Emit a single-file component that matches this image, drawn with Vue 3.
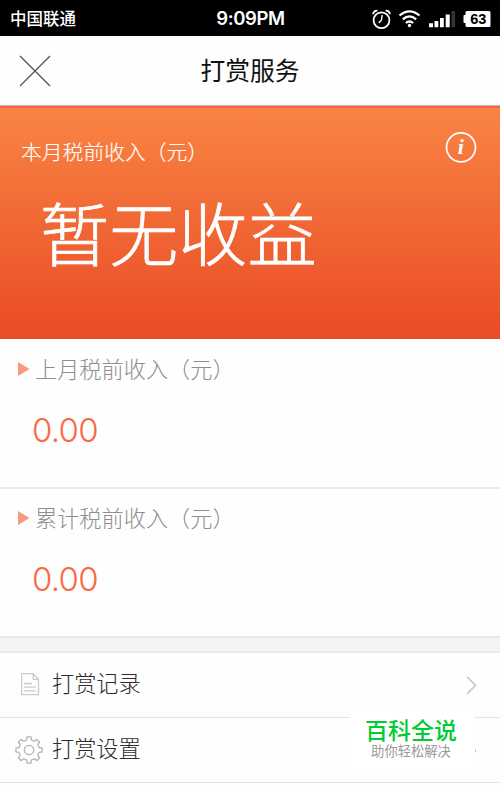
<script setup>
const incomes = [
  { label: '上月税前收入（元）', amount: '0.00' },
  { label: '累计税前收入（元）', amount: '0.00' },
]

// Eight-toothed outline: each tooth rises from the root circle to the tip circle.
const gearPoints = Array.from({ length: 8 }, (_, i) => {
  const base = i * 45 - 90
  return [
    [-15.5, 10.2],
    [-11.5, 10.8],
    [-9, 13.2],
    [9, 13.2],
    [11.5, 10.8],
    [15.5, 10.2],
  ].map(([offset, radius]) => {
    const a = ((base + offset) * Math.PI) / 180
    return `${(14 + radius * Math.cos(a)).toFixed(2)},${(14 + radius * Math.sin(a)).toFixed(2)}`
  }).join(' ')
}).join(' ')
</script>

<template>
  <main class="screen">
    <div class="status">
      <span class="carrier">中国联通</span>
      <span class="time">9:09PM</span>
      <svg class="indicators" width="122" height="24" viewBox="0 0 122 24">
        <g fill="none" stroke="#fff" stroke-width="1.8" stroke-linecap="round">
          <circle cx="12.5" cy="13.2" r="7.9" />
          <path d="M4.200 6.500Q5 4 7.700 3.700M17.300 3.700Q20 4 20.800 6.500" />
          <path d="M13 8.500L12.500 13L10.200 15.500" stroke-width="1.400" />
          <path d="M30.500 8.500Q40.500 .2 50.500 8.500M33.800 12.300Q40.500 6.600 47.200 12.300M36.800 16Q40.500 13 44.200 16" stroke-width="2.200" stroke-linecap="butt" />
        </g>
        <circle cx="40.500" cy="18.500" r="1.700" fill="#fff" />
        <path d="M60 16.200h4v4h-4zM65.500 14h3.800v6.200h-3.800zM71 11h3.800v9.200H71zM76.700 7.400h4v12.800h-4z" fill="#fff" />
        <path d="M82.500 4h3.600v16.200h-3.600z" fill="#333" />
        <path d="M98 4h22q1.500 0 1.500 1.500v13q0 1.500-1.500 1.500H98q-1.500 0-1.500-1.500V16h-1.200q-.8 0-.8-.8V8.800q0-.8.8-.8h1.200V5.500Q96.500 4 98 4z" fill="#fff" />
        <text x="109.300" y="17.200" text-anchor="middle" class="battery">63</text>
      </svg>
    </div>

    <header class="bar">
      <svg class="close" width="32" height="32" viewBox="0 0 32 32">
        <path d="M1 1L31 31M31 1L1 31" stroke="#555" stroke-width="1.300" />
      </svg>
      <h1>打赏服务</h1>
    </header>

    <section class="hero">
      <div class="hero-top">
        <span class="hero-label">本月税前收入（元）</span>
        <svg class="info" width="32" height="32" viewBox="0 0 32 32">
          <circle cx="16" cy="15.300" r="14.500" fill="none" stroke="#fff" stroke-width="1.700" />
          <text x="15.800" y="22.300" text-anchor="middle" class="info-i">i</text>
        </svg>
      </div>
      <p class="hero-value">暂无收益</p>
    </section>

    <section v-for="item in incomes" :key="item.label" class="income">
      <div class="income-label">
        <svg width="12" height="14" viewBox="0 0 12 14"><path d="M0 0L11.500 7L0 14z" fill="#f79a80" /></svg>
        <span>{{ item.label }}</span>
      </div>
      <p class="amount">{{ item.amount }}</p>
    </section>

    <div class="gap"></div>

    <nav>
      <div class="item">
        <svg class="icon" width="28" height="28" viewBox="0 0 28 28" fill="none" stroke="#ccc" stroke-width="1.300">
          <path d="M6.700 2.700H18.200L23.500 8.300V23.700H6.700zM18.200 2.700V8.300H23.500M9 12.500H17M9 16.200H21M9 19.900H21" />
        </svg>
        <span class="name">打赏记录</span>
        <svg class="chevron" width="11" height="20" viewBox="0 0 11 20">
          <path d="M1.200 1.800L9.500 10.300L1.200 18.800" fill="none" stroke="#ccc" stroke-width="1.700" />
        </svg>
      </div>
      <div class="item">
        <svg class="icon" width="28" height="28" viewBox="0 0 28 28" fill="none" stroke="#b5b5b5" stroke-width="1.300" stroke-linejoin="round">
          <polygon :points="gearPoints" />
          <circle cx="14" cy="14" r="4.700" />
        </svg>
        <span class="name">打赏设置</span>
        <i class="speck"></i>
      </div>
    </nav>

    <aside class="watermark">
      <strong>百科全说</strong>
      <span>助你轻松解决</span>
    </aside>
  </main>
</template>

<style>
body {
  margin: 0;
  background: #fff;
}
</style>

<style scoped>
.screen {
  position: relative;
  box-sizing: border-box;
  width: 500px;
  height: 790px;
  overflow: hidden;
  background: #fefefe;
  font-family: "Noto Sans CJK SC", sans-serif;
  font-weight: 300;
}
p, h1 { margin: 0; }
svg { display: block; flex: none; }
.status {
  display: grid;
  grid-template-columns: 1fr auto 1fr;
  align-items: center;
  box-sizing: border-box;
  height: 36px;
  padding: 0 9px 0 10px;
  background: #000;
  color: #fff;
}
.carrier {
  height: 36px;
  font-size: 16.500px;
  font-weight: 500;
  line-height: 35px;
}
.time {
  font: 600 18.500px/37px "Inter", sans-serif;
  letter-spacing: -0.400px;
}
.indicators { justify-self: end; }
.battery {
  font: 700 14.500px "Liberation Sans", sans-serif;
  fill: #000;
}
.bar {
  display: grid;
  grid-template-columns: 32px 1fr 32px;
  align-items: center;
  box-sizing: border-box;
  height: 70px;
  padding: 0 19px;
  border-bottom: 1px solid #c9b8b2;
}
h1 {
  height: 69px;
  color: #111;
  font-size: 24.800px;
  font-weight: 400;
  line-height: 67px;
  text-align: center;
}
.hero {
  box-sizing: border-box;
  height: 233px;
  padding: 24px 23px 0 21px;
  border-top: 2px solid #fa6440;
  background: linear-gradient(#f98443, #e94b26);
  color: #fff;
}
.hero-top {
  display: flex;
  justify-content: space-between;
  height: 38px;
}
.hero-label {
  font-size: 20.800px;
  line-height: 38px;
  -webkit-text-stroke: 0.150px #fff;
}
.hero-value {
  padding: 11px 0 0 19px;
  font-size: 69.200px;
  line-height: 100px;
  -webkit-text-stroke: 0.700px #fff;
}
.info-i {
  font: italic 700 22px "Liberation Serif", serif;
  fill: #fff;
}
.income {
  box-sizing: border-box;
  height: 150px;
  padding: 12px 18px 0;
  border-bottom: 2px solid #e9e9e9;
}
.income + .income {
  height: 149px;
  padding-top: 11px;
}
.income-label {
  display: flex;
  align-items: center;
  gap: 5px;
  height: 36px;
  color: #8e8e8e;
  font-size: 22.200px;
}
.income-label span {
  height: 36px;
  line-height: 34px;
}
.amount {
  padding: 19px 0 0 14px;
  color: #fb6848;
  font: 300 33px/48px "Inter", sans-serif;
  letter-spacing: -0.700px;
}
.gap {
  box-sizing: border-box;
  height: 15px;
  border-bottom: 2px solid #ebebeb;
  background: #f3f3f3;
}
.item {
  display: flex;
  align-items: center;
  box-sizing: border-box;
  height: 65px;
  padding: 0 23px 0 15px;
  border-bottom: 1px solid #e4e4e4;
}
.name {
  flex: 1;
  height: 64px;
  padding-left: 9px;
  color: #2c2c2c;
  font-size: 22.200px;
  line-height: 59px;
}
.speck {
  width: 1px;
  height: 3px;
  margin-right: 1px;
  background: #ccc;
}
.watermark {
  position: absolute;
  top: 710px;
  left: 350px;
  display: flex;
  flex-direction: column;
  align-items: center;
  box-sizing: border-box;
  width: 125px;
  height: 60px;
  padding-top: 7px;
  background: #fff;
}
.watermark strong {
  margin-left: -3px;
  color: #00cc33;
  font-size: 23px;
  font-weight: 500;
  line-height: 24px;
}
.watermark span {
  margin-left: -3px;
  color: #999;
  font-size: 13.300px;
  font-weight: 400;
  line-height: 19px;
}
</style>
